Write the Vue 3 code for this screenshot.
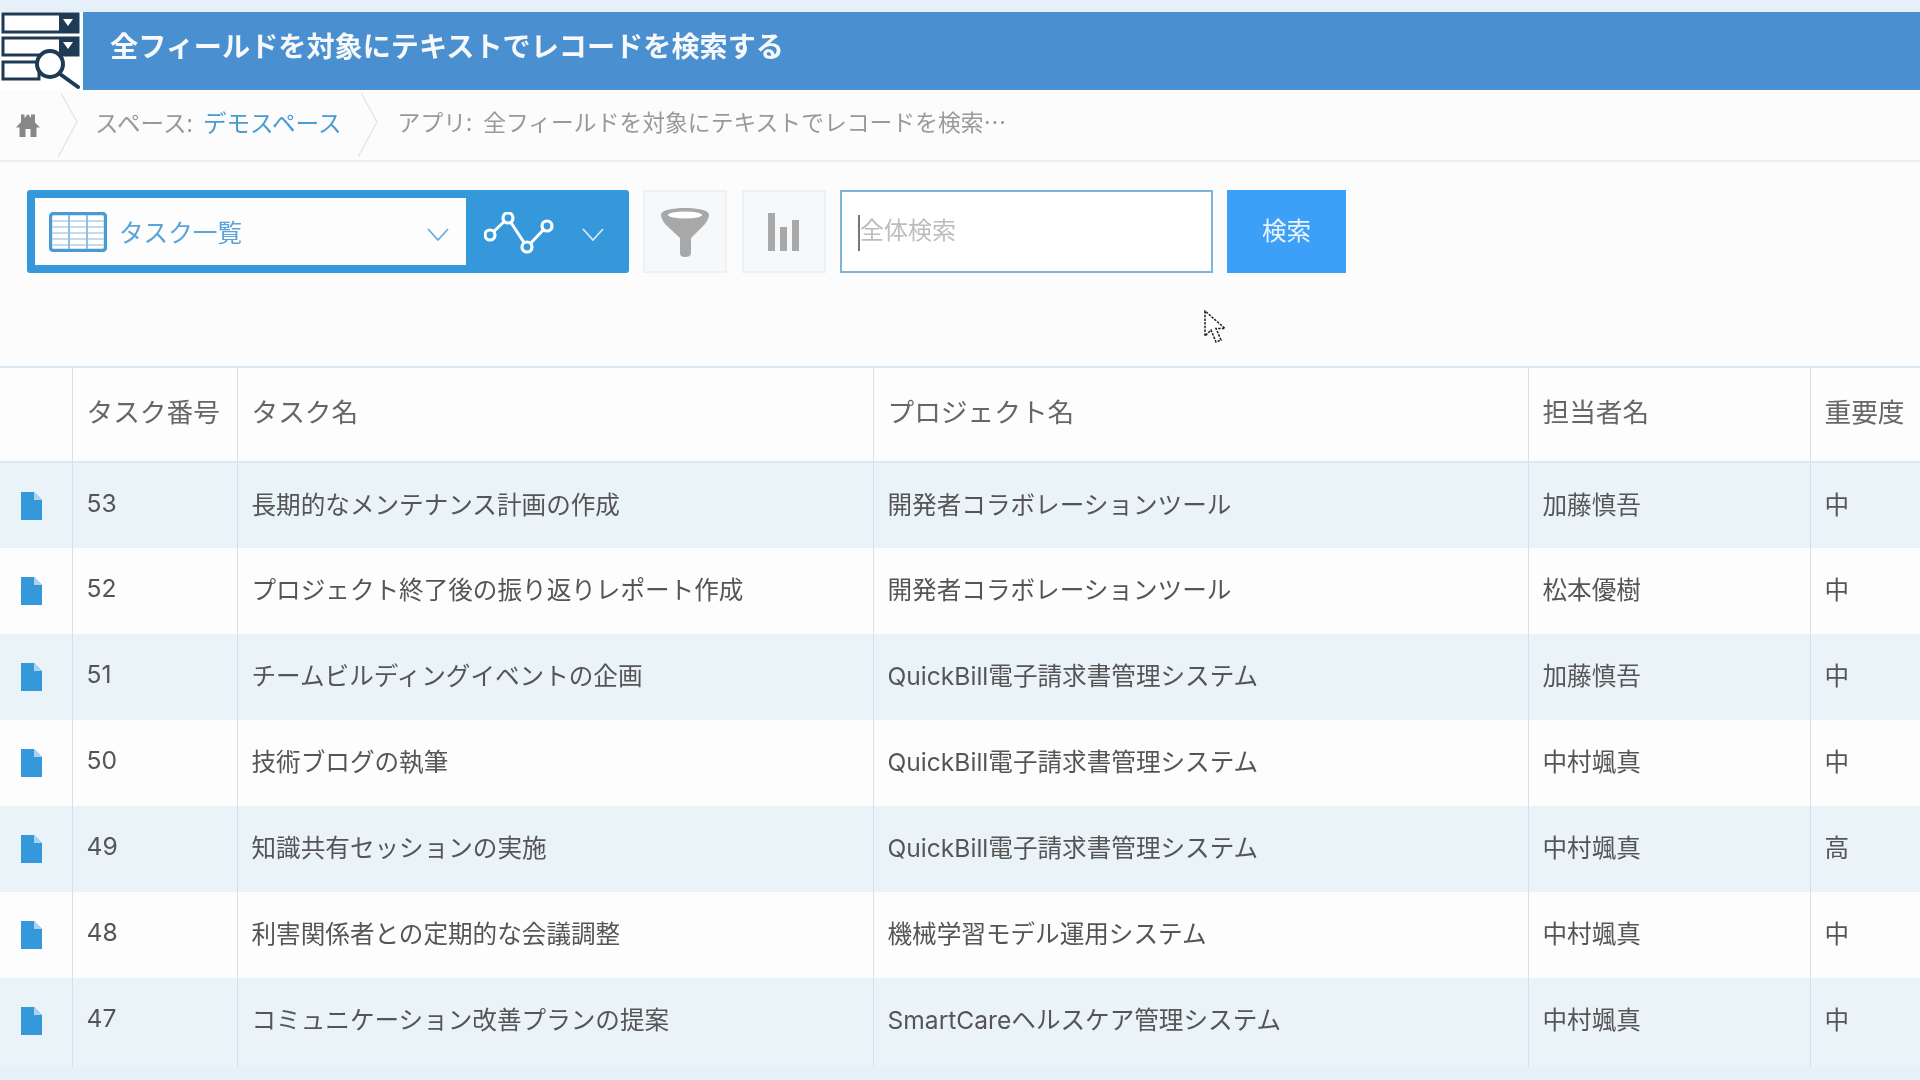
<script setup>
const columns = ['', 'タスク番号', 'タスク名', 'プロジェクト名', '担当者名', '重要度']
const rows = [
  { id: 53, name: '長期的なメンテナンス計画の作成', project: '開発者コラボレーションツール', owner: '加藤慎吾', level: '中' },
  { id: 52, name: 'プロジェクト終了後の振り返りレポート作成', project: '開発者コラボレーションツール', owner: '松本優樹', level: '中' },
  { id: 51, name: 'チームビルディングイベントの企画', project: 'QuickBill電子請求書管理システム', owner: '加藤慎吾', level: '中' },
  { id: 50, name: '技術ブログの執筆', project: 'QuickBill電子請求書管理システム', owner: '中村颯真', level: '中' },
  { id: 49, name: '知識共有セッションの実施', project: 'QuickBill電子請求書管理システム', owner: '中村颯真', level: '高' },
  { id: 48, name: '利害関係者との定期的な会議調整', project: '機械学習モデル運用システム', owner: '中村颯真', level: '中' },
  { id: 47, name: 'コミュニケーション改善プランの提案', project: 'SmartCareヘルスケア管理システム', owner: '中村颯真', level: '中' },
]
</script>

<template>
  <div class="page">
    <header class="title-row">
      <div class="app-icon">
        <svg width="80" height="78" viewBox="0 12 80 78">
          <g fill="#fff" stroke="#1f3a55" stroke-width="3">
            <rect x="3" y="14" width="75" height="18" />
            <rect x="3" y="38" width="75" height="17" />
            <rect x="3" y="62" width="36" height="17" />
          </g>
          <rect x="59" y="13" width="20" height="20" fill="#1f3a55" />
          <rect x="59" y="37" width="20" height="19" fill="#1f3a55" />
          <path d="M63 19h10l-5 7zM63 42h10l-5 7z" fill="#fff" />
          <circle cx="50" cy="64" r="13" fill="#fff" stroke="#1f3a55" stroke-width="4" />
          <path d="M60 74l18 13" stroke="#1f3a55" stroke-width="4" stroke-linecap="round" />
        </svg>
      </div>
      <h1 class="title">全フィールドを対象にテキストでレコードを検索する</h1>
    </header>

    <nav class="crumbs">
      <svg class="home" width="24" height="24" viewBox="0 0 24 24">
        <path d="M12 1 L15 5 V1.5 H19 V9.5 L24 14.5 H20.5 V24 H14.5 V16 H9.5 V24 H3.5 V14.5 H0 L5 9 V1.5 H8.5 V5 Z" fill="#888" />
      </svg>
      <svg class="chev chev-a" width="20" height="64" viewBox="0 0 20 64">
        <path d="M3 0 L19 29 L0 64" fill="none" stroke="#e6e6e6" stroke-width="1.5" />
      </svg>
      <span class="crumb crumb-space">スペース:<span class="val-space link">デモスペース</span></span>
      <svg class="chev chev-b" width="20" height="64" viewBox="0 0 20 64">
        <path d="M3 0 L19 29 L0 64" fill="none" stroke="#e6e6e6" stroke-width="1.5" />
      </svg>
      <span class="crumb">アプリ:<span class="val-app">全フィールドを対象にテキストでレコードを検索⋯</span></span>
    </nav>

    <section class="toolbar">
      <div class="view-tab">
        <div class="view-select">
          <svg width="58" height="40" viewBox="0 0 58 40">
            <rect x="1.5" y="1.5" width="55" height="37" rx="3" fill="#fff" stroke="#4a9bd4" stroke-width="3.4" />
            <path d="M3 9H55M3 15H55M3 21H55M3 27H55M3 33H55" stroke="#c3dbec" stroke-width="2" />
            <path d="M20 3V37M38 3V37" stroke="#8fc0e2" stroke-width="2" />
          </svg>
          <span class="view-name">タスク一覧</span>
          <svg class="view-chev" width="22" height="13" viewBox="0 0 22 13">
            <path d="M1 1 L11 12 L21 1" fill="none" stroke="#6aaedc" stroke-width="1.8" />
          </svg>
        </div>
        <svg class="graph" width="72" height="44" viewBox="0 0 72 44">
          <path d="M6 23L24 6L43 35L63 14" fill="none" stroke="#fff" stroke-width="3" />
          <g fill="#3498db" stroke="#fff" stroke-width="3.2">
            <circle cx="6" cy="23" r="5" />
            <circle cx="24" cy="6" r="5" />
            <circle cx="43" cy="35" r="5" />
            <circle cx="63" cy="14" r="5" />
          </g>
        </svg>
        <svg class="tab-chev" width="22" height="13" viewBox="0 0 22 13">
          <path d="M1 1 L11 12 L21 1" fill="none" stroke="#d5e9f7" stroke-width="1.8" />
        </svg>
      </div>

      <button class="tool-btn" type="button" aria-label="絞り込み">
        <svg width="50" height="50" viewBox="0 0 50 50">
          <path d="M1 8C1 3 12 1 25 1S49 3 49 8C49 11 47 14 45 17L31 31V46C31 49 28 50 25 50S20 49 20 46V31L5 17C3 14 1 11 1 8Z" fill="#a8a8a8" />
          <ellipse cx="25" cy="8" rx="17" ry="3.500" fill="#fff" />
        </svg>
      </button>
      <button class="tool-btn" type="button" aria-label="グラフ">
        <svg width="32" height="38" viewBox="0 0 32 38">
          <rect x="0" y="0" width="7" height="38" fill="#a8a8a8" />
          <rect x="12" y="14" width="7" height="24" fill="#a8a8a8" />
          <rect x="24" y="7" width="7" height="31" fill="#a8a8a8" />
        </svg>
      </button>

      <div class="search-box">
        <input class="search-input" type="text" placeholder="全体検索" readonly />
        <span class="caret"></span>
      </div>
      <button class="search-btn" type="button">検索</button>

      <svg class="pointer" width="24" height="34" viewBox="0 0 24 34">
        <path d="M1 1V26L7 20L12 32L17 30L12 18.500H21Z" fill="#fff" stroke="#222" stroke-width="1.500" stroke-dasharray="2.500 1.200" />
      </svg>
    </section>

    <table class="records">
      <colgroup>
        <col class="c0" /><col class="c1" /><col class="c2" /><col class="c3" /><col class="c4" /><col />
      </colgroup>
      <thead>
        <tr><th v-for="(c, i) in columns" :key="i">{{ c }}</th></tr>
      </thead>
      <tbody>
        <tr v-for="r in rows" :key="r.id">
          <td class="doc-cell">
            <svg width="21" height="28" viewBox="0 0 21 28">
              <path d="M0 0H13L21 8V28H0Z" fill="#3498db" />
              <path d="M13 0L21 8H13Z" fill="#a9d3ef" />
            </svg>
          </td>
          <td>{{ r.id }}</td>
          <td>{{ r.name }}</td>
          <td>{{ r.project }}</td>
          <td>{{ r.owner }}</td>
          <td>{{ r.level }}</td>
        </tr>
      </tbody>
    </table>
  </div>
</template>

<style>
html, body { margin: 0; padding: 0; background: #e6f0f8; }
</style>

<style scoped>
.page {
  width: 1920px;
  height: 1080px;
  overflow: hidden;
  background: #e6f0f8;
  padding-top: 12px;
  box-sizing: border-box;
  font-family: "Noto Sans", "Noto Sans CJK JP", sans-serif;
  color: #555;
  filter: blur(0.45px);
}
.title-row { display: flex; height: 78px; background: #fff; }
.app-icon { width: 83px; flex: none; }
.app-icon svg { display: block; }
.title {
  flex: 1;
  margin: 0;
  padding-left: 27px;
  background: #4a90d0;
  color: #f6f8fa;
  font-size: 28.15px;
  font-weight: 700;
  line-height: 68px;
}
.crumbs {
  display: flex;
  align-items: center;
  height: 70px;
  padding-left: 16px;
  background: #fcfcfc;
  border-bottom: 2px solid #eeeeee;
  font-size: 22.8px;
  color: #999;
  white-space: nowrap;
}
.crumb { padding-bottom: 7px; }
.crumb-space { font-size: 23.6px; }
.val-space { margin-left: 10px; }
.val-app { margin-left: 11px; }
.home { flex: none; margin-right: 18px; }
.chev { flex: none; }
.chev-a { margin-right: 17px; }
.chev-b { margin: 0 20px 0 16px; }
.link { color: #4a9bd4; }
.toolbar {
  position: relative;
  display: flex;
  height: 83px;
  padding: 28px 0 0 27px;
  background: #fcfcfc;
  padding-bottom: 93px;
}
.view-tab {
  display: flex;
  align-items: center;
  width: 602px;
  height: 83px;
  box-sizing: border-box;
  padding-left: 8px;
  background: #3498db;
  border-radius: 3px;
}
.view-select {
  display: flex;
  align-items: center;
  width: 431px;
  height: 67px;
  box-sizing: border-box;
  padding-left: 14px;
  background: #fdfdfd;
}
.view-name { margin-left: 12px; padding-bottom: 2px; font-size: 24.6px; color: #5ba3d9; }
.view-chev { margin-left: auto; margin-right: 17px; margin-top: 6px; }
.graph { margin-left: 18px; margin-top: 4px; }
.tab-chev { margin-left: 26px; margin-top: 6px; }
.tool-btn {
  display: flex;
  align-items: center;
  justify-content: center;
  width: 84px;
  height: 83px;
  margin-left: 14px;
  padding: 0;
  background: #f6f9fb;
  border: 2px solid #eef0f1;
  box-sizing: border-box;
}
.tool-btn + .tool-btn { margin-left: 15px; }
.search-box { position: relative; margin-left: 14px; width: 373px; height: 83px; }
.search-input {
  width: 100%;
  height: 100%;
  box-sizing: border-box;
  padding: 0 0 4px 18px;
  border: 2px solid #7fb3d9;
  background: #fff;
  font: inherit;
  font-size: 24px;
  outline: none;
}
.search-input::placeholder { color: #bdbdbd; opacity: 1; }
.caret { position: absolute; left: 18px; top: 25px; width: 2px; height: 36px; background: #777; }
.search-btn {
  width: 119px;
  height: 83px;
  margin-left: 14px;
  padding: 0 0 4px;
  border: 0;
  background: #3da0f8;
  color: #eaf4fc;
  font: inherit;
  font-size: 24.5px;
}
.pointer { position: absolute; left: 1204px; top: 148px; }
.records {
  width: 1920px;
  table-layout: fixed;
  border-collapse: collapse;
  background: #fdfdfd;
  border-top: 2px solid #dde9f2;
}
.c0 { width: 72px; }
.c1 { width: 165px; }
.c2 { width: 636px; }
.c3 { width: 655px; }
.c4 { width: 282px; }
th, td {
  padding: 0 0 6px 14px;
  border-left: 1.5px solid #cfe2ef;
  text-align: left;
  white-space: nowrap;
  overflow: hidden;
  box-sizing: border-box;
}
th:first-child, td:first-child { border-left: 0; }
th {
  height: 95px;
  padding-bottom: 9px;
  font-size: 26.7px;
  font-weight: 400;
  color: #666;
  border-bottom: 2px solid #dde9f2;
}
td {
  height: 86px;
  font-family: Inter, "Noto Sans CJK JP", sans-serif;
  font-size: 24.6px;
}
tbody tr:nth-child(odd) td { background: #eaf3f8; }
tbody tr:last-child td { height: 89px; padding-bottom: 9px; }
tbody tr:last-child td.doc-cell { padding-bottom: 3px; }
td.doc-cell { padding: 0 0 0 21px; }
.doc-cell svg { display: block; }
</style>
